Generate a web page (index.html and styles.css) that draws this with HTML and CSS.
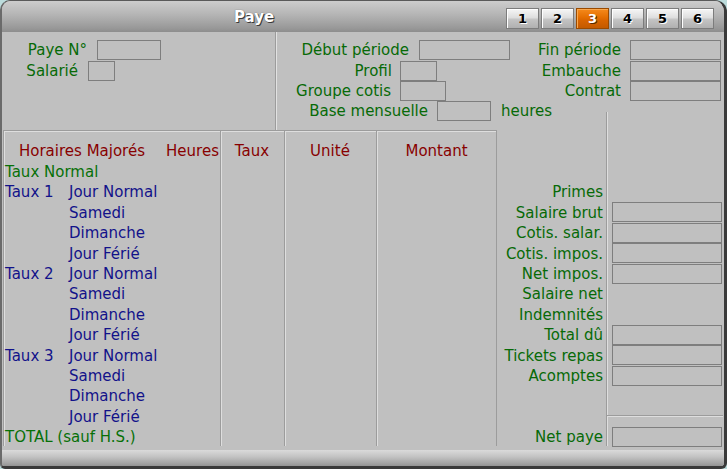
FILE: index.html
```html
<!DOCTYPE html>
<html lang="fr">
<head>
<meta charset="utf-8">
<title>Paye</title>
<link rel="stylesheet" href="styles.css">
</head>
<body>
<div class="window">
  <div class="titlebar">
    <div class="title">Paye</div>
    <div class="tabs">
      <span class="tab">1</span>
      <span class="tab">2</span>
      <span class="tab active">3</span>
      <span class="tab">4</span>
      <span class="tab">5</span>
      <span class="tab">6</span>
    </div>
  </div>

  <div class="top">
    <div class="panel-left">
      <div class="row"><span class="lbl lw-paye">Paye N°</span><span class="box bw-paye"></span></div>
      <div class="row"><span class="lbl lw-sal">Salarié</span><span class="box bw-sal"></span></div>
    </div>
    <div class="panel-mid">
      <div class="row"><span class="lbl lw-debut">Début période</span><span class="box bw-debut"></span></div>
      <div class="row"><span class="lbl lw-profil">Profil</span><span class="box bw-profil"></span></div>
      <div class="row"><span class="lbl lw-groupe">Groupe cotis</span><span class="box bw-groupe"></span></div>
      <div class="row"><span class="lbl lw-base">Base mensuelle</span><span class="box bw-base"></span><span class="lbl unit">heures</span></div>
    </div>
    <div class="panel-right">
      <div class="row"><span class="lbl lw-right">Fin période</span><span class="box bw-right"></span></div>
      <div class="row"><span class="lbl lw-right">Embauche</span><span class="box bw-right"></span></div>
      <div class="row"><span class="lbl lw-right">Contrat</span><span class="box bw-right"></span></div>
    </div>
  </div>

  <div class="lower">
    <div class="col c1"></div>
    <div class="col c2"></div>
    <div class="col c3"></div>
    <div class="col c4"></div>
    <div class="boxcol"></div>
    <div class="boxsep"></div>

    <div class="hd hd1"><span>Horaires Majorés</span><span class="hd-heures">Heures</span></div>
    <div class="hd hd2">Taux</div>
    <div class="hd hd3">Unité</div>
    <div class="hd hd4">Montant</div>

    <div class="cell g r1">Taux Normal</div>
    <div class="cell b r2"><span class="grp">Taux 1</span>Jour Normal</div>
    <div class="cell b r3"><span class="grp"></span>Samedi</div>
    <div class="cell b r4"><span class="grp"></span>Dimanche</div>
    <div class="cell b r5"><span class="grp"></span>Jour Férié</div>
    <div class="cell b r6"><span class="grp">Taux 2</span>Jour Normal</div>
    <div class="cell b r7"><span class="grp"></span>Samedi</div>
    <div class="cell b r8"><span class="grp"></span>Dimanche</div>
    <div class="cell b r9"><span class="grp"></span>Jour Férié</div>
    <div class="cell b r10"><span class="grp">Taux 3</span>Jour Normal</div>
    <div class="cell b r11"><span class="grp"></span>Samedi</div>
    <div class="cell b r12"><span class="grp"></span>Dimanche</div>
    <div class="cell b r13"><span class="grp"></span>Jour Férié</div>
    <div class="cell g r14">TOTAL (sauf H.S.)</div>

    <div class="slbl r2">Primes</div>
    <div class="slbl r3">Salaire brut</div>
    <div class="slbl r4">Cotis. salar.</div>
    <div class="slbl r5">Cotis. impos.</div>
    <div class="slbl r6">Net impos.</div>
    <div class="slbl r7">Salaire net</div>
    <div class="slbl r8">Indemnités</div>
    <div class="slbl r9">Total dû</div>
    <div class="slbl r10">Tickets repas</div>
    <div class="slbl r11">Acomptes</div>
    <div class="slbl r14">Net paye</div>

    <div class="sbox r3"><span class="box bw-side"></span></div>
    <div class="sbox r4"><span class="box bw-side"></span></div>
    <div class="sbox r5"><span class="box bw-side"></span></div>
    <div class="sbox r6"><span class="box bw-side"></span></div>
    <div class="sbox r9"><span class="box bw-side"></span></div>
    <div class="sbox r10"><span class="box bw-side"></span></div>
    <div class="sbox r11"><span class="box bw-side"></span></div>
    <div class="sbox r14"><span class="box bw-side"></span></div>
  </div>

  <div class="statusbar"></div>
</div>
</body>
</html>
```

FILE: styles.css
```css
html, body {
  margin: 0;
  padding: 0;
  background: #bcdcdc;
}

body {
  font-family: "DejaVu Sans", Verdana, sans-serif;
  font-size: 15px;
}

.window {
  box-sizing: border-box;
  width: 727px;
  height: 469px;
  background: #c0c0c0;
  border-style: solid;
  border-color: #5a5a5a #3a3a3a #3a3a3a #6a6a6a;
  border-width: 1px 3px 3px 2px;
  border-radius: 10px 12px 6px 5px;
  overflow: hidden;
  display: flex;
  flex-direction: column;
}

/* ---------- title bar ---------- */
.titlebar {
  height: 31px;
  flex: none;
  display: flex;
  align-items: flex-start;
  background: linear-gradient(#cdcdcd, #b4b4b4 45%, #9a9a9a 85%, #8e8e8e);
}

.title {
  flex: 1;
  text-align: center;
  font-weight: bold;
  font-size: 15px;
  line-height: 33px;
  color: #ffffff;
  text-shadow: 1px 1px 0 #3a3a3a, 0 0 1px #555555;
}

.tabs {
  display: flex;
  gap: 2px;
  margin-top: 7px;
  padding-right: 10px;
}

.tab {
  box-sizing: border-box;
  width: 33px;
  height: 21px;
  border: 1px solid #7c7c7c;
  background: linear-gradient(#f6f6f6, #dedede 45%, #c4c4c4 55%, #b0b0b0);
  box-shadow: inset 1px 1px 0 #ffffff;
  font-weight: bold;
  font-size: 13px;
  line-height: 19px;
  text-align: center;
  color: #000000;
  text-shadow: 1px 1px 0 #ffffff;
}

.tab.active {
  border-color: #9a4a00;
  background: linear-gradient(#f58a1c, #e46e00 45%, #d86400 60%, #c45a00);
  box-shadow: inset 1px 1px 0 #f8a850;
  color: #ffffff;
  text-shadow: 1px 1px 0 #5a2a00;
}

/* ---------- top fields ---------- */
.top {
  height: 98px;
  flex: none;
  display: flex;
}

.panel-left {
  width: 274px;
  border-right: 1px solid #9c9c9c;
  box-shadow: 1px 0 0 #e2e2e2;
  padding-top: 8px;
  box-sizing: border-box;
}

.panel-mid {
  width: 233px;
  padding-top: 8px;
  margin-left: 1px;
}

.panel-right {
  padding-top: 8px;
}

.row {
  display: flex;
  align-items: center;
  height: 20.4px;
}

.lbl {
  color: #076a07;
  line-height: 20px;
  white-space: nowrap;
  text-align: right;
  flex: none;
}

.box {
  box-sizing: border-box;
  display: block;
  height: 20px;
  border: 1px solid #7e7e7e;
  flex: none;
}

.lw-paye { width: 85px; }
.bw-paye { width: 64px; margin-left: 10px; }
.lw-sal { width: 76px; }
.bw-sal { width: 27px; margin-left: 10px; }

.lw-debut { width: 132px; }
.bw-debut { width: 91px; margin-left: 10px; }
.lw-profil { width: 115px; }
.bw-profil { width: 37px; margin-left: 8px; }
.lw-groupe { width: 114px; }
.bw-groupe { width: 46px; margin-left: 9px; }
.lw-base { width: 151px; }
.bw-base { width: 54px; margin-left: 9px; }
.unit { margin-left: 10px; }

.lw-right { width: 111px; }
.bw-right { width: 91px; margin-left: 9px; }

/* ---------- lower grid ---------- */
.lower {
  height: 320px;
  flex: none;
  padding-left: 1px;
  display: grid;
  grid-template-columns: 217px 64px 92px 121px 109px 117px;
  grid-template-rows: 31px repeat(14, 20.4px) 1fr;
}

.col {
  grid-row: 1 / 16;
  border-left: 1px solid #9c9c9c;
  border-top: 1px solid #9c9c9c;
  box-shadow: inset 1px 1px 0 #dedede;
}
.c1 { grid-column: 1; }
.c2 { grid-column: 2; }
.c3 { grid-column: 3; }
.c4 { grid-column: 4; border-right: 1px solid #9c9c9c; }

.boxcol {
  grid-column: 6;
  grid-row: 1 / 16;
  margin-top: -18px;
  border-left: 1px solid #9c9c9c;
  box-shadow: inset 1px 0 0 #dedede;
}

.boxsep {
  grid-column: 6;
  grid-row: 14;
  margin-top: 9px;
  margin-left: 1px;
  border-top: 1px solid #9c9c9c;
  box-shadow: inset 0 1px 0 #dedede;
}

.hd {
  grid-row: 1;
  padding-top: 11px;
  line-height: 20px;
  color: #880000;
  text-align: center;
  white-space: nowrap;
}
.hd1 {
  grid-column: 1;
  display: flex;
  padding-left: 16px;
  padding-right: 1px;
  text-align: left;
}
.hd-heures { margin-left: auto; }
.hd2 { grid-column: 2; }
.hd3 { grid-column: 3; }
.hd4 { grid-column: 4; }

.cell {
  grid-column: 1;
  display: flex;
  padding-left: 2px;
  padding-top: 1px;
  line-height: 20.4px;
  white-space: nowrap;
}
.cell.g { color: #077007; }
.cell.b { color: #12128a; }
.grp { width: 64px; flex: none; }

.slbl {
  grid-column: 5;
  text-align: right;
  padding-right: 3px;
  padding-top: 1px;
  line-height: 20.4px;
  color: #076a07;
  white-space: nowrap;
}

.sbox {
  grid-column: 6;
  display: flex;
  align-items: center;
  padding-left: 6px;
  padding-top: 1px;
}
.bw-side { width: 110px; }

.r1 { grid-row: 2; }
.r2 { grid-row: 3; }
.r3 { grid-row: 4; }
.r4 { grid-row: 5; }
.r5 { grid-row: 6; }
.r6 { grid-row: 7; }
.r7 { grid-row: 8; }
.r8 { grid-row: 9; }
.r9 { grid-row: 10; }
.r10 { grid-row: 11; }
.r11 { grid-row: 12; }
.r12 { grid-row: 13; }
.r13 { grid-row: 14; }
.r14 { grid-row: 15; }

/* ---------- status bar ---------- */
.statusbar {
  flex: 1;
  background: linear-gradient(#dadada, #c4c4c4 40%, #a6a6a6 80%, #949494);
}
```
